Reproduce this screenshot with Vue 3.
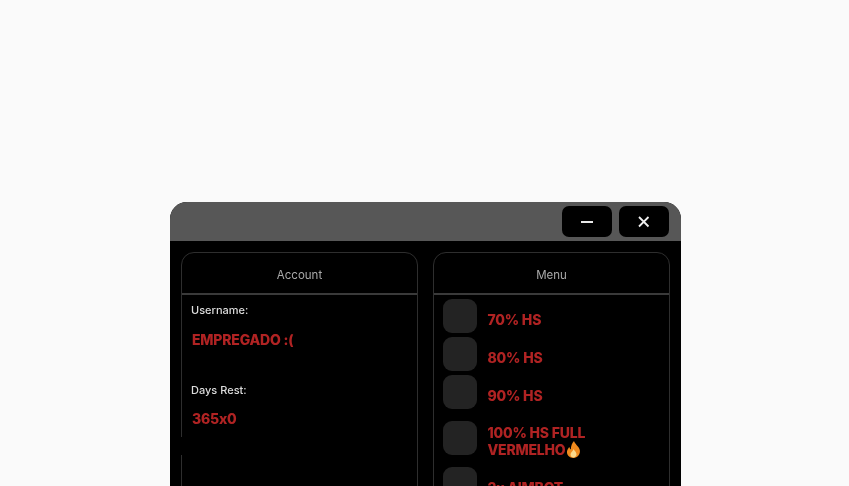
<template>
  <div class="page">
    <div class="window">
      <div class="titlebar">
        <button class="win-btn" aria-label="Minimize">
          <svg width="14" height="14" viewBox="0 0 14 14"><path d="M1 7h12" stroke="#e8e8e8" stroke-width="2" /></svg>
        </button>
        <button class="win-btn" aria-label="Close">
          <svg width="14" height="14" viewBox="0 0 14 14"><path d="M2 2l9.500 9.500M11.500 2L2 11.500" stroke="#efefef" stroke-width="1.800" /></svg>
        </button>
      </div>
      <div class="body">
        <section class="panel account">
          <div class="panel-head">Account</div>
          <div class="panel-content">
            <div class="label">Username:</div>
            <div class="value">EMPREGADO :(</div>
            <div class="label days">Days Rest:</div>
            <div class="value rest">365x0</div>
          </div>
          <span class="border-gap"></span>
        </section>
        <section class="panel menu">
          <div class="panel-head">Menu</div>
          <div class="menu-list">
            <div v-for="item in items" :key="item.name" class="menu-row" :class="{ tall: item.tall }">
              <span class="check"></span>
              <span class="menu-text">
                {{ item.name }}<br v-if="item.second" />{{ item.second }}
                <svg v-if="item.fire" class="flame" width="15" height="17" viewBox="0 0 15 17">
                  <path d="M8 0c.6 3 4.800 5 5.800 9 .8 4-2.200 8-6.300 8S.6 14 1 10.500C1.300 8.500 2.500 7 3.400 6c.2 1.300.7 2 1.500 2.400C4.800 5 6 2 8 0z" fill="#f08a1d" />
                  <path d="M7.700 8c.3 1.500 2.800 3 2.800 5.300 0 1.900-1.300 3.200-3 3.200s-3-1.300-3-3c0-2 2.500-3.200 3.200-5.500z" fill="#fbd98c" />
                </svg>
              </span>
            </div>
          </div>
        </section>
      </div>
    </div>
  </div>
</template>

<script setup>
const items = [
  { name: '70% HS' },
  { name: '80% HS' },
  { name: '90% HS' },
  { name: '100% HS FULL', second: 'VERMELHO', fire: true, tall: true },
  { name: '2x AIMBOT' },
]
</script>

<style>
html,
body {
  margin: 0;
  background: #fafafa;
  overflow: hidden;
}
</style>

<style scoped>
.page {
  height: 486px;
  overflow: hidden;
  padding: 202px 0 0 170px;
  box-sizing: border-box;
  font-family: Inter, "Liberation Sans", sans-serif;
  font-feature-settings: "calt" 0;
}

.window {
  width: 511px;
  height: 400px;
  border-radius: 17px 17px 0 0;
  overflow: hidden;
  background: #000;
  filter: blur(0.4px);
}

.titlebar {
  height: 39px;
  box-sizing: border-box;
  background: #575757;
  display: flex;
  justify-content: flex-end;
  gap: 7px;
  padding: 4px 12px 0 0;
}

.win-btn {
  width: 50px;
  height: 31px;
  border: 0;
  border-radius: 7px;
  background: #000;
  padding: 0;
  display: flex;
  align-items: center;
  justify-content: center;
}

.body {
  display: flex;
  gap: 15px;
  padding: 11px 11px 0;
}

.panel {
  position: relative;
  width: 237px;
  height: 300px;
  box-sizing: border-box;
  border: 1.500px solid #2e2e2e;
  border-radius: 13px;
  flex: none;
}

.panel-head {
  height: 40px;
  line-height: 45px;
  text-align: center;
  font-size: 11.500px;
  color: #a9a9a9;
  border-bottom: 2px solid #3a3a3a;
}

.panel-content {
  padding: 7px 9px;
}

.label {
  font-size: 11px;
  font-weight: 500;
  line-height: 16px;
  color: #dcdcdc;
}

.days {
  margin-top: 33px;
}

.value {
  margin: 13px 0 0 1px;
  font-size: 14px;
  font-weight: 800;
  letter-spacing: -0.2px;
  line-height: 18px;
  color: #b02323;
}

.rest {
  margin-top: 12px;
}

.border-gap {
  position: absolute;
  left: -2px;
  top: 184px;
  width: 2px;
  height: 18px;
  background: #000;
}

.menu-list {
  display: flex;
  flex-direction: column;
  gap: 4px;
  padding: 4px 8.500px;
}

.menu-row {
  display: flex;
  align-items: center;
  gap: 11px;
}

.menu-row.tall {
  margin: 8px 0 8px;
}

.check {
  width: 34px;
  height: 34px;
  flex: none;
  border-radius: 9px;
  background: #232323;
}

.menu-text {
  position: relative;
  top: 3px;
  font-size: 14px;
  font-weight: 800;
  letter-spacing: -0.2px;
  line-height: 17px;
  color: #b02323;
}

.flame {
  vertical-align: -3px;
  margin-left: -2px;
}
</style>
